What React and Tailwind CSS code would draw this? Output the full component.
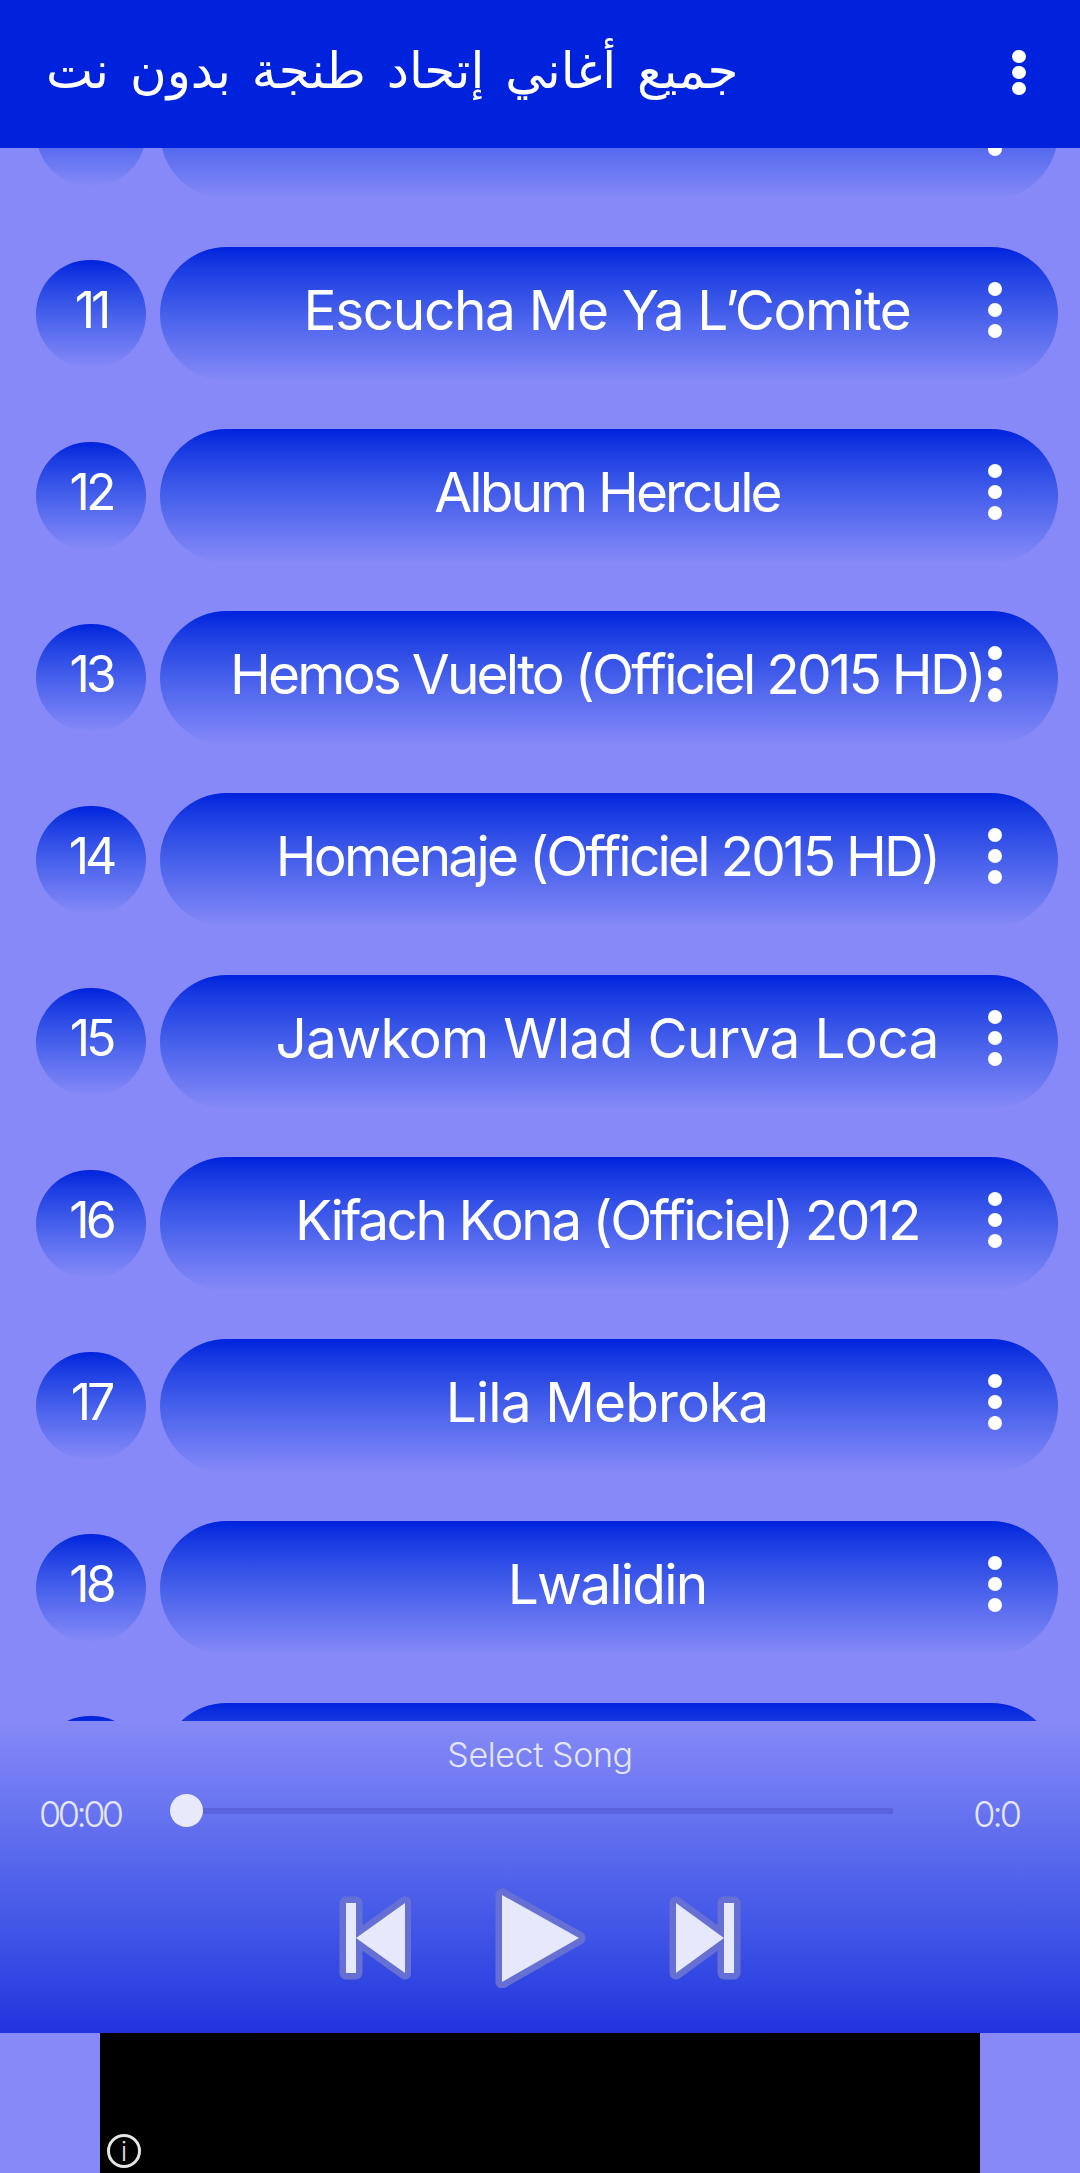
const songs = [
  ["10", "Donde Donde", "tracking-[-1.2px]"],
  ["11", "Escucha Me Ya L’Comite", "tracking-[-1.4px]"],
  ["12", "Album Hercule", "tracking-[-2.9px]"],
  ["13", "Hemos Vuelto (Officiel 2015 HD)", "tracking-[-2.8px]"],
  ["14", "Homenaje (Officiel 2015 HD)", "tracking-[-2.8px]"],
  ["15", "Jawkom Wlad Curva Loca", "tracking-[-0.7px]"],
  ["16", "Kifach Kona (Officiel) 2012", "tracking-[-2.5px]"],
  ["17", "Lila Mebroka", "tracking-[-0.9px]"],
  ["18", "Lwalidin", "tracking-[-1.8px]"],
  ["19", "Ma Tkhafoch", "tracking-[-1px]"],
];

function SongRow({ num, title, track }) {
  return (
    <div className="flex items-center h-[134px] pl-[36px] pr-[22px] gap-[14px]">
      <div className="w-[110px] h-[108px] shrink-0 rounded-full bg-gradient-to-b from-[#0022dd] to-[#8689f7] flex items-center justify-center pb-[8px] text-white text-[50px] tracking-[-4px]">
        {num}
      </div>
      <div className="flex-1 min-w-0 h-[134px] rounded-full bg-gradient-to-b from-[#0022dd] to-[#8689f7] flex items-center relative">
        <div className={"flex-1 min-w-0 text-center text-white text-[55px] whitespace-nowrap pl-[60px] pr-[64px] pb-[8px] " + track}>
          {title}
        </div>
        {/* row menu */}
        <div className="absolute right-[56px] top-[35px] flex flex-col gap-[7px]">
          <span className="block w-[14px] h-[14px] rounded-full bg-white" />
          <span className="block w-[14px] h-[14px] rounded-full bg-white" />
          <span className="block w-[14px] h-[14px] rounded-full bg-white" />
        </div>
      </div>
    </div>
  );
}

export default function App() {
  return (
    <div className="w-[1080px] h-[2173px] flex flex-col bg-[#8689f7] overflow-hidden font-['Inter',sans-serif]">
      {/* top bar */}
      <div className="h-[148px] shrink-0 bg-[#0022dd] flex items-center justify-between pl-[46px] pr-[54px] relative z-10">
        <div dir="rtl" className="text-white text-[50px] pb-[6px] font-['DejaVu_Sans',sans-serif] [word-spacing:5px]">
          جميع أغاني إتحاد طنجة بدون نت
        </div>
        <div className="flex flex-col gap-[3px] pb-[4px]">
          <span className="block w-[14px] h-[13px] rounded-full bg-white" />
          <span className="block w-[14px] h-[13px] rounded-full bg-white" />
          <span className="block w-[14px] h-[13px] rounded-full bg-white" />
        </div>
      </div>

      {/* song list, scrolled part way */}
      <div className="flex-1 overflow-hidden">
        <div className="mt-[-83px] flex flex-col gap-[48px]">
          {songs.map((s) => (
            <SongRow key={s[0]} num={s[0]} title={s[1]} track={s[2]} />
          ))}
        </div>
      </div>

      {/* player */}
      <div className="h-[312px] shrink-0 bg-gradient-to-b from-[#8689f7] to-[#2233dd] flex flex-col items-center">
        <div className="mt-[11px] text-[#e4e6fb] text-[34px] leading-[46px] font-light tracking-[-0.4px]">Select Song</div>
        <div className="w-full flex items-center pl-[39px] pr-[61px] mt-[7px] text-[#e4e6fb] text-[36px] leading-[46px] font-light">
          <span className="w-[131px] pt-[6px] tracking-[-3.5px]">00:00</span>
          <div className="flex-1 h-[6px] bg-[#5a63dc] relative">
            <span className="absolute left-0 top-[-14px] w-[33px] h-[33px] rounded-full bg-[#e8eafc]" />
          </div>
          <span className="w-[126px] pt-[6px] text-right tracking-[-3px]">0:0</span>
        </div>
        {/* transport buttons */}
        <div className="flex items-center justify-center gap-[83px] mt-[51px]">
          <svg width="72" height="86" viewBox="0 0 72 86">
            <path d="M7 8H17V78H7ZM17 43L66 8V78Z" fill="#e6e8fb" stroke="#6670d4" strokeWidth="13" strokeLinejoin="round" paintOrder="stroke" />
          </svg>
          <svg width="92" height="100" viewBox="0 0 92 100">
            <path d="M8 7L85 50L8 94Z" fill="#e6e8fb" stroke="#6670d4" strokeWidth="13" strokeLinejoin="round" paintOrder="stroke" />
          </svg>
          <svg width="72" height="86" viewBox="0 0 72 86">
            <path d="M7 8L55 43V8H65V78H55V43L7 78Z" fill="#e6e8fb" stroke="#6670d4" strokeWidth="13" strokeLinejoin="round" paintOrder="stroke" />
          </svg>
        </div>
      </div>

      {/* ad strip */}
      <div className="h-[140px] shrink-0 flex justify-center bg-[#8689f7]">
        <div className="w-[880px] h-full bg-black relative">
          <div className="absolute left-[7px] bottom-[5px] w-[34px] h-[34px] rounded-full border-[3px] border-[#e5e5e5] text-[#e5e5e5] flex items-center justify-center text-[26px] font-light">
            i
          </div>
        </div>
      </div>
    </div>
  );
}
